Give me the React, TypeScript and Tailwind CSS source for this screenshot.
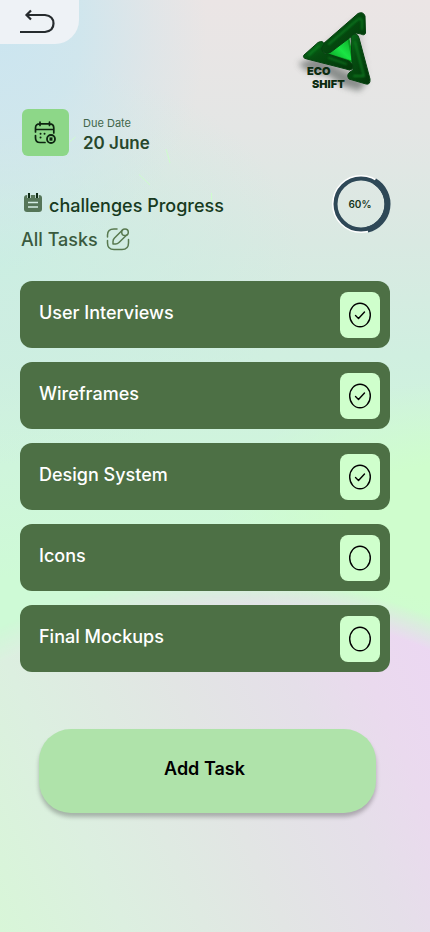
import { useState } from "react";

const initialTasks = [
  { id: "user-interviews", name: "User Interviews", done: true },
  { id: "wireframes", name: "Wireframes", done: true },
  { id: "design-system", name: "Design System", done: true },
  { id: "icons", name: "Icons", done: false },
  { id: "final-mockups", name: "Final Mockups", done: false },
];

function Backdrop() {
  return (
    <div aria-hidden="true" className="absolute inset-0 -z-10 overflow-hidden bg-[linear-gradient(180deg,#ebe5e5_0%,#e4e6e5_14%,#d9e9e2_26%,#d0efe0_38%,#cff5dc_50%,#cefad6_62%)]">
      <div className="absolute inset-0 bg-[radial-gradient(ellipse_70%_22%_at_0%_28%,#cbeee2_0%,#cbeee280_50%,#cbeee200_100%)]" />
      <div className="absolute inset-0 bg-[radial-gradient(ellipse_48%_26%_at_0%_3%,#cbe5f0_0%,#cde6eee0_40%,#cde6ee50_75%,#cde6ee00_100%)]" />
      <div className="absolute inset-0 bg-[radial-gradient(ellipse_55%_16%_at_105%_57%,#cffdcd_0%,#cffdcd_45%,#cffdcd00_100%)]" />
      <div className="absolute inset-0 bg-[linear-gradient(66deg,#d8f6d8_0%,#dcefe0_15%,#e2e5e4_34%,#e5dfe9_48%,#eadaee_57%,#ecd7f3_68%)] mask-[radial-gradient(ellipse_107%_43%_at_53%_107%,black_97%,transparent_105%)]" />
      <svg width="240" height="220" viewBox="0 0 240 220" className="absolute top-0 left-0" fill="none" stroke="#cffdcd">
        <path d="M69.500 142L75.500 137M166 149L170 163M139 174.500L150 185M211.500 193V205" />
      </svg>
    </div>
  );
}

function Logo() {
  return (
    <svg role="img" aria-label="Eco Shift" width="100" height="100" viewBox="0 0 100 100" className="mr-[45px]">
      <defs>
        <linearGradient id="arm" x1="0" y1="0" x2="1" y2="1">
          <stop offset="0" stopColor="#08701a" />
          <stop offset="0.400" stopColor="#054c10" />
          <stop offset="1" stopColor="#033509" />
        </linearGradient>
        <linearGradient id="core" x1="0" y1="1" x2="1" y2="0">
          <stop offset="0" stopColor="#078a1c" />
          <stop offset="0.500" stopColor="#1ae544" />
          <stop offset="1" stopColor="#0a9a22" />
        </linearGradient>
        <filter id="soft" x="-30%" y="-30%" width="160%" height="160%">
          <feGaussianBlur stdDeviation="3" />
        </filter>
        <filter id="shine" x="-30%" y="-30%" width="160%" height="160%">
          <feGaussianBlur stdDeviation="1" />
        </filter>
      </defs>
      <path d="M13 63L32 58L62 72L82 82L74 91L58 86L44 76L20 70Z" fill="#4b5350" opacity="0.600" filter="url(#soft)" />
      <path d="M20 60L74 16L82 78Z" fill="#777" opacity="0.300" filter="url(#soft)" />
      <path d="M63 36L68 62L42 54Z" fill="url(#core)" stroke="#0a9a22" strokeWidth="2" strokeLinejoin="round" />
      <g fill="url(#arm)" stroke="#05420f" strokeWidth="1" strokeLinejoin="round">
        <path d="M73 13.500Q78 11 80 16L80.500 33Q79.500 36 76 34L71 33L46 52Q41 55 37 51Q35 48 38 44Z" />
        <path d="M66 36Q72 31 74 38L85 79Q85.500 85 81 84L64 79Q61 75 65 72L68 70L67 61Z" />
        <path d="M19 55L33 42.500Q38 40 39 44L36 49Q38 54 43 54L64 61Q70 65 67 69Q65 71 61 69L22 59Q17 58 19 55Z" />
      </g>
      <g fill="none" stroke="#129a2c" strokeWidth="1.800" strokeLinecap="round" opacity="0.600" filter="url(#shine)">
        <path d="M44 44L72 20Q76 17 77 21L77 29" />
        <path d="M70 42L79 76L69 76" />
        <path d="M24 55L34 46M44 58L61 64" />
      </g>
      <g fill="#0b2b10" className="font-[Inter,sans-serif] text-[11px] font-black">
        <text x="22" y="75">ECO</text>
        <text x="27" y="88">SHIFT</text>
      </g>
    </svg>
  );
}

function CalendarIcon() {
  return (
    <svg aria-hidden="true" width="23" height="24" viewBox="0 0 23 24" fill="none" stroke="#0d2410" strokeWidth="1.700" strokeLinecap="round">
      <path d="M6 1V4.500M15.500 1V4.500M1.500 8.500H19.500M1.500 11V7Q1.500 2.800 6 2.800H15.500Q19.800 2.800 19.800 7V12M1.500 14.500V17Q1.500 21.500 6 21.500H11" />
      <path d="M6.500 12.800H6.600M6.500 16.500H6.600M10.500 12.800H10.600" strokeWidth="1.900" />
      <circle cx="17" cy="18" r="4" strokeWidth="1.800" />
      <path d="M16.200 17.200L17.800 18.800M17.800 17.200L16.200 18.800" />
    </svg>
  );
}

function NotesIcon() {
  return (
    <svg aria-hidden="true" width="18" height="20" viewBox="0 0 18 20" fill="none" className="mb-1">
      <path d="M3 2H15Q18 2 18 5V16Q18 19 15 19H3Q0 19 0 16V5Q0 2 3 2Z" fill="#557558" />
      <path d="M3.200 0H6.800V5H3.200ZM11.200 0H14.800V5H11.200Z" fill="#cfe5df" />
      <path d="M5 0V5M13 0V5" stroke="#0d2a14" strokeWidth="2" />
      <path d="M4 9.500H14M4 14H14" stroke="#d3ebe3" strokeWidth="1.600" />
    </svg>
  );
}

function EditIcon() {
  return (
    <svg aria-hidden="true" width="24" height="24" viewBox="0 0 24 24" fill="none" stroke="#58794f" strokeWidth="1.500" strokeLinecap="round" strokeLinejoin="round">
      <path d="M11 2H8Q1.500 2 1.500 8V10M1.500 13.500V16Q1.500 22.500 8 22.500H16Q22.500 22.500 22.500 16V12.500" />
      <path d="M16 3.500L8.500 11Q7 12.500 7 14.500V17H9.500Q11.500 17 13 15.500L20.700 8" />
      <circle cx="19" cy="5.200" r="3.300" />
    </svg>
  );
}

function ProgressRing() {
  return (
    <div className="relative flex size-[60px] items-center justify-center">
      <svg aria-hidden="true" viewBox="0 0 60 60" className="absolute inset-0 overflow-visible" fill="none">
        <circle cx="31" cy="30" r="28" stroke="white" strokeWidth="2" />
        <circle cx="31" cy="30" r="25.500" stroke="#2e4857" strokeWidth="4" />
        <path d="M44.500 7.200A26.500 26.500 0 0 1 37.500 55.700" stroke="#2e4857" strokeWidth="6" />
      </svg>
      <span className="text-[10px] font-semibold text-[#163520]">60%</span>
    </div>
  );
}

export default function App() {
  const [tasks, setTasks] = useState(initialTasks);
  const toggle = (id: string) =>
    setTasks((list) => list.map((t) => (t.id === id ? { ...t, done: !t.done } : t)));

  return (
    <main className="relative isolate min-h-screen pb-10 font-[Inter,sans-serif] text-[#27472c]">
      <Backdrop />
      <header className="flex items-start justify-between">
        <button type="button" aria-label="Back" className="flex h-11 w-[79px] items-center justify-center rounded-br-3xl bg-[#eef2f6] pr-0.5">
          <svg aria-hidden="true" width="40" height="26" viewBox="0 0 40 26" fill="none" stroke="#262b2e" strokeWidth="2.200">
            <path d="M1 23H26Q34.500 22 34.500 14.500T26 6H8M12 1.500L7.500 6L12 10.500" />
          </svg>
        </button>
        <Logo />
      </header>

      <section className="mt-[9px] flex items-center gap-3.5 px-[22px]">
        <div className="flex size-[47px] items-center justify-center rounded-md bg-[#8dd788]">
          <CalendarIcon />
        </div>
        <div>
          <p className="text-[11px] leading-5 text-[#41664a]">Due Date</p>
          <p className="text-[17px] leading-5 font-semibold">20 June</p>
        </div>
      </section>

      <section className="mt-[18px] mr-10 ml-[21px] flex items-start justify-between">
        <div>
          <h1 className="flex h-[62px] items-center gap-[7px] pl-[3px] text-[18px] font-medium text-[#173a20]">
            <NotesIcon />
            challenges Progress
          </h1>
          <div className="-mt-[9px] flex h-6 items-center gap-2">
            <h2 className="text-[18px] font-medium text-[#3a5a3e]">All Tasks</h2>
            <button type="button" aria-label="Edit tasks">
              <EditIcon />
            </button>
          </div>
        </div>
        <ProgressRing />
      </section>

      <ul className="mt-[30px] mr-10 ml-5 flex flex-col gap-3.5">
        {tasks.map((task) => (
          <li key={task.id} className="flex h-[67px] items-center justify-between rounded-xl bg-[#4d7045] pr-2.5 pl-[19px]">
            <label htmlFor={task.id} className="pb-1 text-[18px] font-medium text-white">
              {task.name}
            </label>
            <span className="relative flex h-[46px] w-10">
              <input
                id={task.id}
                type="checkbox"
                checked={task.done}
                onChange={() => toggle(task.id)}
                className="h-full w-full cursor-pointer appearance-none rounded-lg bg-[#cfffcc]"
              />
              <svg aria-hidden="true" viewBox="0 0 40 46" className="pointer-events-none absolute inset-0" fill="none" stroke="black" strokeWidth="1.400" strokeLinecap="round" strokeLinejoin="round">
                <ellipse cx="20" cy="23" rx="10.300" ry="11.800" />
                {task.done && <path d="M15.500 23.500L18.500 26.500L24.500 20" />}
              </svg>
            </span>
          </li>
        ))}
      </ul>

      <div className="mt-[57px] mr-[54px] ml-[39px]">
        <button type="button" className="flex h-[84px] w-full items-center justify-center rounded-[32px] bg-[#afe3aa] pr-1.5 pb-1.5 text-[18px] font-semibold text-black shadow-[0_4px_4px_rgba(0,0,0,0.25)]">
          Add Task
        </button>
      </div>
    </main>
  );
}
